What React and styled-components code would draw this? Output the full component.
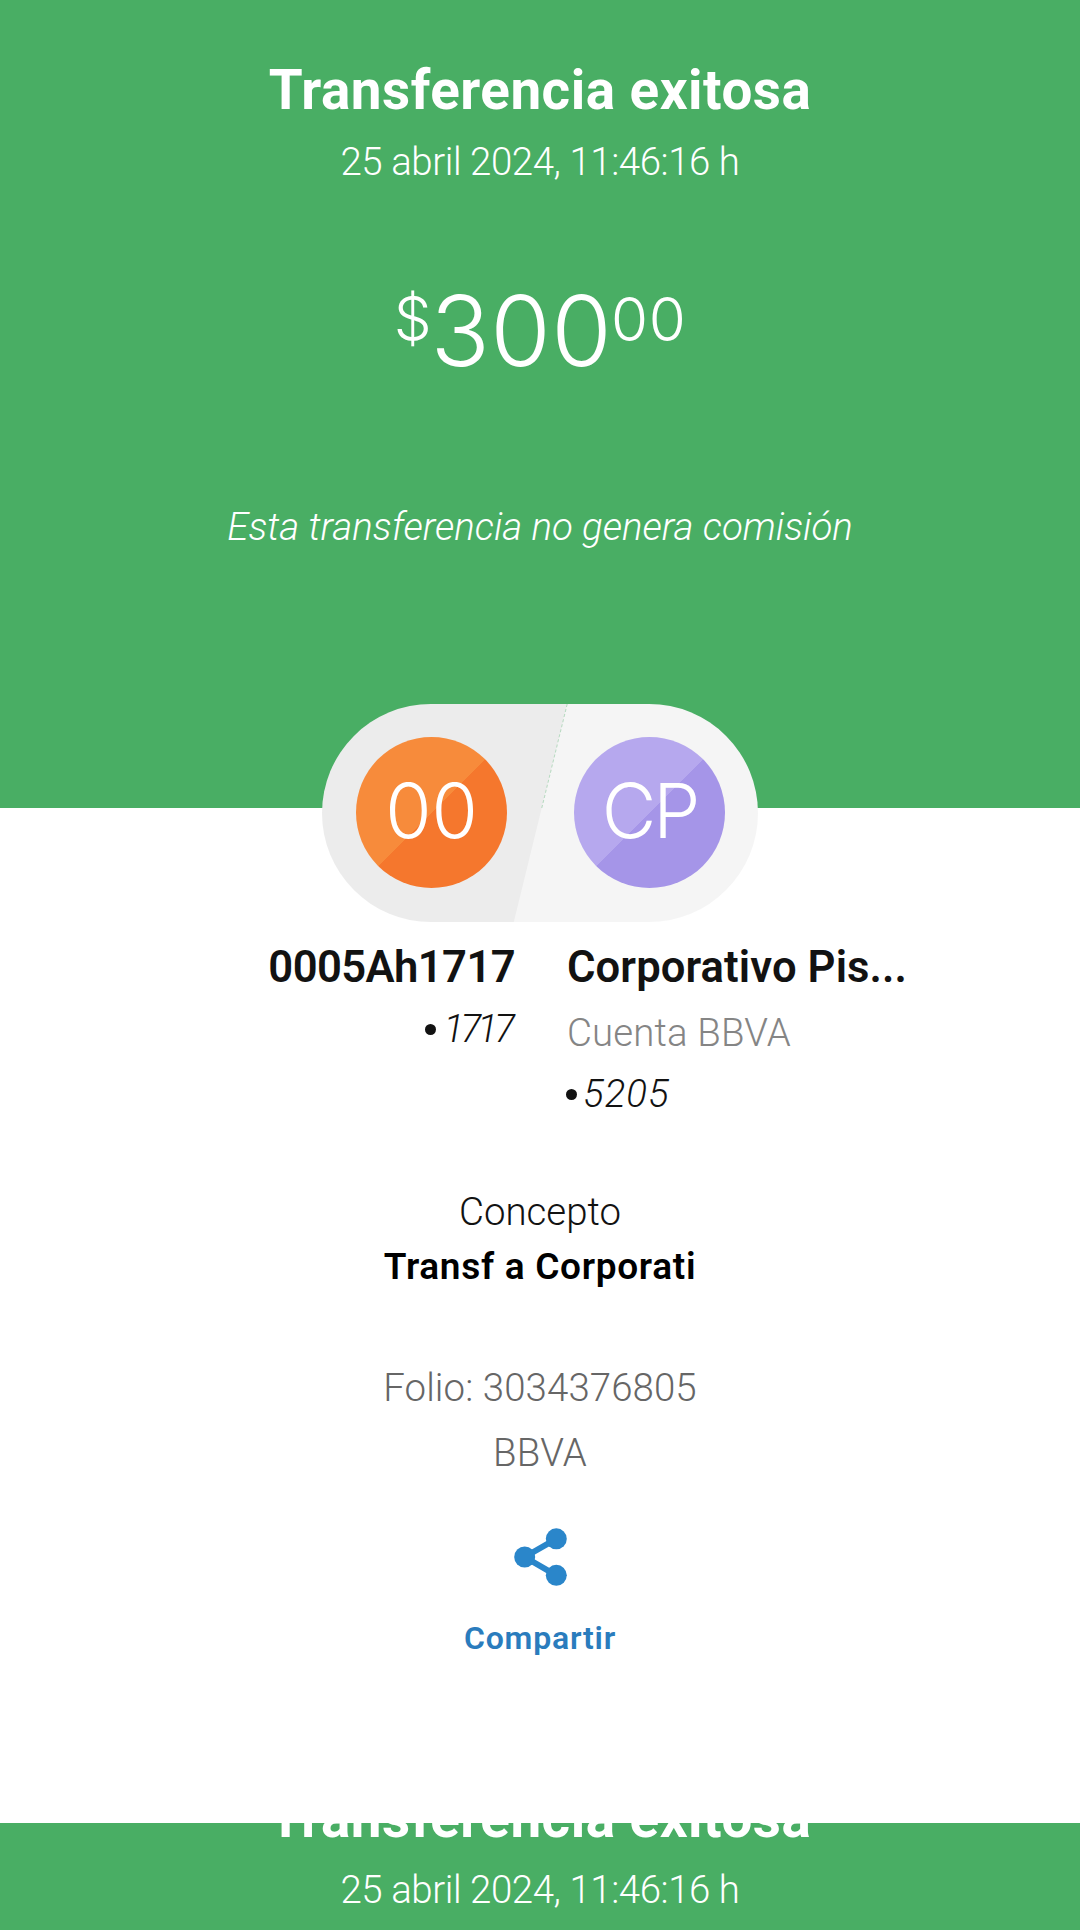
import React from "react";
import styled, { createGlobalStyle } from "styled-components";

const GlobalStyle = createGlobalStyle`
  * { box-sizing: border-box; }
  body {
    margin: 0;
    background: #ffffff;
    font-family: Roboto, "Open Sans", sans-serif;
    -webkit-font-smoothing: antialiased;
  }
`;

const Screen = styled.main`
  display: flex;
  flex-direction: column;
  width: 1080px;
  height: 1930px;
  overflow: hidden;
  background: #ffffff;
`;

const Header = styled.header`
  flex: none;
  display: flex;
  flex-direction: column;
  align-items: center;
  height: 808px;
  padding-top: 58px;
  background: #49ae64;
  color: #ffffff;
`;

const Title = styled.h1`
  margin: 0;
  font-size: 54.8px;
  font-weight: 700;
  line-height: 64px;
  letter-spacing: 0.5px;
  white-space: nowrap;
`;

const Timestamp = styled.p`
  margin: 16px 0 0;
  font-size: 38.4px;
  font-weight: 300;
  line-height: 48px;
  letter-spacing: -0.42px;
  white-space: nowrap;
`;

const Amount = styled.div`
  display: flex;
  align-items: flex-start;
  margin-top: 95px;
  height: 101px;
  font-family: Inter, Roboto, sans-serif;
  font-optical-sizing: none;
`;

const Units = styled.span`
  font-size: 98px;
  font-weight: 280;
  line-height: 100px;
  letter-spacing: 0.3px;
`;

const Minor = styled.span`
  margin: ${(p) => p.$margin};
  font-size: 60px;
  font-weight: 280;
  line-height: 60px;
  letter-spacing: ${(p) => p.$tracking};
`;

const Notice = styled.p`
  margin: 121px 0 0;
  font-size: 38.4px;
  font-style: italic;
  font-weight: 300;
  line-height: 48px;
  white-space: nowrap;
`;

const Pill = styled.section`
  position: relative;
  flex: none;
  display: flex;
  justify-content: space-between;
  align-items: flex-start;
  align-self: center;
  width: 436px;
  height: 218px;
  margin-top: -104px;
  padding: 33px 33px 0 34px;
  border-radius: 109px;
  background: linear-gradient(103.76deg, #ececec 50%, #f5f5f5 50.2%);

  &::after {
    content: "";
    position: absolute;
    top: 0;
    left: 232px;
    height: 104px;
    border-left: 1px dashed rgba(73, 174, 100, 0.35);
    transform: skewX(-13.76deg);
  }
`;

const Avatar = styled.div`
  display: flex;
  justify-content: center;
  align-items: center;
  width: 151px;
  height: 151px;
  padding-bottom: 3px;
  border-radius: 50%;
  background: linear-gradient(135deg, ${(p) => p.$light} 50%, ${(p) => p.$dark} 50.3%);
  color: #ffffff;
  font-family: Inter, Roboto, sans-serif;
  font-size: 75px;
  font-optical-sizing: none;
  font-weight: 290;
  line-height: 88px;
  letter-spacing: ${(p) => p.$tracking}px;
`;

const Parties = styled.section`
  display: grid;
  grid-template-columns: 515px 1fr;
  column-gap: 52px;
  height: 266px;
  padding-top: 20px;
  color: #121212;
`;

const Party = styled.div`
  display: flex;
  flex-direction: column;
  align-items: ${(p) => p.$align};
`;

const PartyName = styled.h2`
  margin: 0;
  font-size: 43.6px;
  font-weight: 600;
  line-height: 52px;
  letter-spacing: ${(p) => p.$tracking}px;
  white-space: nowrap;
`;

const AccountKind = styled.p`
  margin: 15px 0 0;
  color: #858585;
  font-size: 38.4px;
  font-weight: 300;
  line-height: 48px;
  letter-spacing: 0.15px;
`;

const AccountNumber = styled.p`
  display: flex;
  align-items: center;
  gap: ${(p) => p.$gap}px;
  margin: ${(p) => p.$margin};
  font-size: 38.4px;
  font-style: italic;
  font-weight: 300;
  line-height: 48px;
  letter-spacing: ${(p) => p.$tracking}px;
`;

const Dot = styled.i`
  width: 11px;
  height: 11px;
  margin-top: 1px;
  border-radius: 50%;
  background: #121212;
`;

const Details = styled.section`
  display: flex;
  flex-direction: column;
  align-items: center;
  white-space: nowrap;
`;

const Label = styled.span`
  color: #121212;
  font-size: 38.4px;
  font-weight: 300;
  line-height: 48px;
`;

const Concept = styled.strong`
  margin: 7px 0 73px;
  color: #000000;
  font-size: 37px;
  font-weight: 600;
  line-height: 48px;
  letter-spacing: 0.7px;
`;

const Reference = styled.span`
  margin-bottom: ${(p) => p.$gap || 0}px;
  color: #666666;
  font-size: 38.4px;
  font-weight: 300;
  line-height: 48px;
  letter-spacing: ${(p) => p.$tracking || 0}px;
`;

const ShareButton = styled.button`
  display: flex;
  flex-direction: column;
  align-items: center;
  align-self: center;
  gap: 32px;
  margin: 50px 0 0;
  padding: 0;
  border: 0;
  background: none;
  color: #2a7cbd;
  font-family: inherit;
  font-size: 32px;
  font-weight: 600;
  line-height: 40px;
  letter-spacing: 0.8px;
`;

const Repeat = styled.footer`
  flex: none;
  display: flex;
  flex-direction: column;
  align-items: center;
  height: 107px;
  margin-top: auto;
  overflow: hidden;
  background: #49ae64;
  color: #ffffff;

  ${Title} {
    margin-top: -37px;
  }
`;

function ShareIcon() {
  return (
    <svg width="54" height="59" viewBox="0 0 54 59" fill="#2a86ca">
      <path d="M43.3 11.8 11.7 30 43.3 48.3" fill="none" stroke="#2a86ca" strokeWidth="6" />
      <circle cx="43.3" cy="11.8" r="10.5" />
      <circle cx="11.7" cy="30" r="10.5" />
      <circle cx="43.3" cy="48.3" r="10.5" />
    </svg>
  );
}

const title = "Transferencia exitosa";
const time = "25 abril 2024, 11:46:16 h";

export default function App() {
  return (
    <Screen>
      <GlobalStyle />
      <Header>
        <Title>{title}</Title>
        <Timestamp>{time}</Timestamp>
        <Amount>
          <Minor $margin="7px 0 0 0" $tracking="-1px">$</Minor>
          <Units>300</Units>
          <Minor $margin="8px 0 0 -1px" $tracking="0.6px">00</Minor>
        </Amount>
        <Notice>Esta transferencia no genera comisión</Notice>
      </Header>
      <Pill>
        <Avatar $light="#f78b3b" $dark="#f5772d" $tracking={0}>00</Avatar>
        <Avatar $light="#b6a8ee" $dark="#a595e8" $tracking={-3}>CP</Avatar>
      </Pill>
      <Parties>
        <Party $align="flex-end">
          <PartyName $tracking={-0.6}>0005Ah1717</PartyName>
          <AccountNumber $margin="11px 4px 0 0" $gap={8} $tracking={-3.8}><Dot />1717</AccountNumber>
        </Party>
        <Party $align="flex-start">
          <PartyName $tracking={0.1}>Corporativo Pis...</PartyName>
          <AccountKind>Cuenta BBVA</AccountKind>
          <AccountNumber $margin="13px 0 0 -1px" $gap={6} $tracking={1}><Dot />5205</AccountNumber>
        </Party>
      </Parties>
      <Details>
        <Label>Concepto</Label>
        <Concept>Transf a Corporati</Concept>
        <Reference $gap={17} $tracking={0.1}>Folio: 3034376805</Reference>
        <Reference $tracking={0.3}>BBVA</Reference>
      </Details>
      <ShareButton>
        <ShareIcon />
        Compartir
      </ShareButton>
      <Repeat>
        <Title as="div">{title}</Title>
        <Timestamp>{time}</Timestamp>
      </Repeat>
    </Screen>
  );
}
